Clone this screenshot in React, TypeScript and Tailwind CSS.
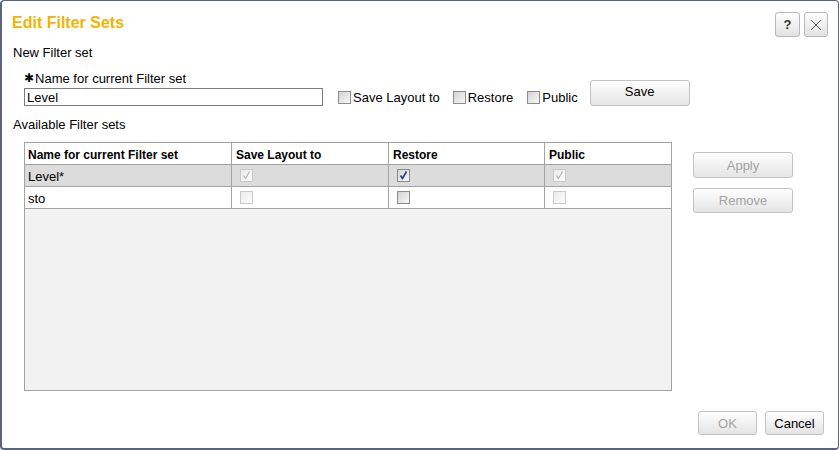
import React from 'react';

type BoxProps = { checked?: boolean; disabled?: boolean };

function Box({ checked = false, disabled = false }: BoxProps) {
  return (
    <span
      className={
        disabled
          ? 'relative inline-block h-[13px] w-[13px] shrink-0 border border-[#c9c9c9] bg-gradient-to-br from-[#ececec] to-[#fbfbfb]'
          : 'relative inline-block h-[13px] w-[13px] shrink-0 border border-[#8c8c8c] bg-gradient-to-br from-[#d4d4d4] to-[#f7f7f7]'
      }
    >
      {checked && (
        <svg viewBox="0 0 11 11" className="absolute left-0 top-0 h-[11px] w-[11px]">
          <path
            d="M2.5 5.5 L4.5 8.5 L8.5 1.5"
            fill="none"
            stroke={disabled ? '#b4b4b4' : '#2a3d8c'}
            strokeWidth={disabled ? 1.1 : 1.6}
          />
        </svg>
      )}
    </span>
  );
}

function Btn({ label, disabled = false, className = '' }: { label: string; disabled?: boolean; className?: string }) {
  return (
    <button
      type="button"
      className={`flex items-center justify-center rounded-[3px] border border-[#c3c3c3] bg-gradient-to-b from-white to-[#e4e4e4] text-[13px] leading-[15px] ${
        disabled ? 'text-[#a3a3a3]' : 'text-black'
      } ${className}`}
    >
      {label}
    </button>
  );
}

const rows = [
  { name: 'Level*', save: true, restore: true, pub: true, selected: true },
  { name: 'sto', save: false, restore: false, pub: false, selected: false },
];

export default function App() {
  return (
    <div
      className="flex h-[450px] w-[839px] flex-col overflow-hidden rounded-[4px] border border-b-2 border-l-2 border-[#5a647a] bg-white text-black"
      style={{ fontFamily: '"Liberation Sans", Arial, sans-serif' }}
    >
      {/* header */}
      <div className="flex justify-between pl-[10px] pr-[10px] pt-[11px]">
        <h1 className="mt-[2px] text-[16px] font-bold leading-[18px] text-[#f4b300]">Edit Filter Sets</h1>
        <div className="flex gap-[4px]">
          <button
            type="button"
            className="flex h-[25px] w-[25px] items-center justify-center rounded-[3px] border border-[#b9b9b9] bg-gradient-to-b from-white to-[#e2e2e2] text-[13px] font-bold text-[#333]"
          >
            ?
          </button>
          <button
            type="button"
            className="flex h-[25px] w-[24px] items-center justify-center rounded-[3px] border border-[#b9b9b9] bg-gradient-to-b from-white to-[#e2e2e2]"
          >
            <svg viewBox="0 0 12 12" className="h-[12px] w-[12px]">
              <path d="M1 1 L11 11 M11 1 L1 11" stroke="#555" strokeWidth="1" />
            </svg>
          </button>
        </div>
      </div>

      <div className="ml-[11px] mt-[8px] text-[13px] leading-[15px]">New Filter set</div>

      {/* new filter set row */}
      <div className="ml-[22px] mt-[11px] flex items-end">
        <div className="flex flex-col">
          <div className="flex items-center text-[13px] leading-[15px]">
            <span className="mr-[1px] text-[12px]" style={{ fontFamily: '"DejaVu Sans", sans-serif' }}>
              ✱
            </span>
            Name for current Filter set
          </div>
          <input
            readOnly
            value="Level"
            className="mt-[2px] h-[18px] w-[299px] border border-[#7d7d7d] px-[2px] text-[13px] leading-[15px] outline-none"
          />
        </div>
        <label className="mb-[1px] ml-[15px] flex items-center gap-[2px] text-[13px] leading-[15px]">
          <Box />
          Save Layout to
        </label>
        <label className="mb-[1px] ml-[13px] flex items-center gap-[2px] text-[13px] leading-[15px]">
          <Box />
          Restore
        </label>
        <label className="mb-[1px] ml-[14px] flex items-center gap-[2px] text-[13px] leading-[15px]">
          <Box />
          Public
        </label>
        <Btn label="Save" className="ml-[12px] h-[26px] w-[100px] pb-[3px]" />
      </div>

      <div className="ml-[11px] mt-[11px] text-[13px] leading-[15px]">Available Filter sets</div>

      {/* table + side buttons */}
      <div className="mt-[10px] flex">
        <div className="ml-[22px] flex h-[249px] w-[648px] flex-col border border-[#a3a3a3] bg-[#f2f2f2]">
          <div className="grid h-[22px] grid-cols-[207px_157px_156px_1fr] border-b border-[#a3a3a3] bg-white text-[12px] font-bold leading-[14px]">
            <div className="flex items-center border-r border-[#a3a3a3] pl-[3px] pt-[2px]">Name for current Filter set</div>
            <div className="flex items-center border-r border-[#a3a3a3] pl-[4px] pt-[2px]">Save Layout to</div>
            <div className="flex items-center border-r border-[#a3a3a3] pl-[4px] pt-[2px]">Restore</div>
            <div className="flex items-center pl-[4px] pt-[2px]">Public</div>
          </div>
          {rows.map((r) => (
            <div
              key={r.name}
              className={`grid h-[22px] grid-cols-[207px_157px_156px_1fr] border-b border-[#a3a3a3] text-[13px] leading-[15px] ${
                r.selected ? 'bg-[#dcdcdc]' : 'bg-white'
              }`}
            >
              <div className="flex items-center border-r border-[#a3a3a3] pl-[3px] pt-[1px]">{r.name}</div>
              <div className="flex items-center border-r border-[#a3a3a3] pl-[8px]">
                <Box checked={r.save} disabled />
              </div>
              <div className="flex items-center border-r border-[#a3a3a3] pl-[8px]">
                <Box checked={r.restore} />
              </div>
              <div className="flex items-center pl-[8px]">
                <Box checked={r.pub} disabled />
              </div>
            </div>
          ))}
        </div>
        <div className="ml-[21px] mt-[10px] flex flex-col gap-[10px]">
          <Btn label="Apply" disabled className="h-[26px] w-[100px]" />
          <Btn label="Remove" disabled className="h-[25px] w-[100px]" />
        </div>
      </div>

      {/* footer */}
      <div className="mr-[14px] mt-[20px] flex justify-end gap-[8px]">
        <Btn label="OK" disabled className="h-[24px] w-[59px]" />
        <Btn label="Cancel" className="h-[24px] w-[59px]" />
      </div>
    </div>
  );
}
